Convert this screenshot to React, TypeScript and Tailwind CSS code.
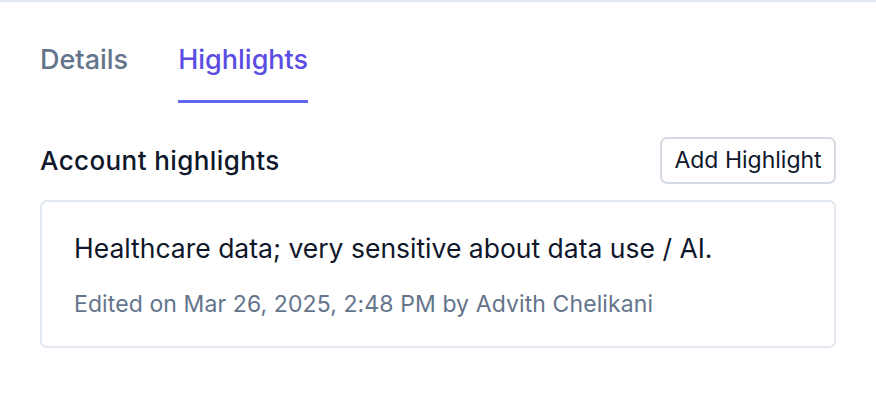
import React from "react";

export default function App() {
  return (
    <div className="w-[876px] h-[420px] bg-white border-t-2 border-[#e2e8f0] overflow-hidden" style={{ fontFamily: "Inter, 'Noto Sans', sans-serif" }}>
      <div className="px-10">
        <div className="flex items-start gap-[50px] pt-[40px]">
          <div className="text-[27px] leading-[36px] text-[#64748b] font-medium">Details</div>
          <div className="pb-[22px] text-[27px] leading-[36px] text-[#5b4de4] font-medium border-b-[3px] border-[#6366f1]">Highlights</div>
        </div>
        <div className="mt-[34px] flex items-center justify-between">
          <div className="text-[26px] leading-[32px] tracking-[0.4px] font-medium text-[#0f172a]">Account highlights</div>
          <button className="h-[47px] w-[176px] rounded-[7px] border-2 border-[#d3dae3] text-[23px] text-[#0f172a] bg-white">Add Highlight</button>
        </div>
        <div className="mt-[16px] h-[148px] rounded-[7px] border-2 border-[#e2e8f0] px-[32px] pt-[30px]">
          <div className="text-[26.5px] leading-[32px] text-[#0f172a]">Healthcare data; very sensitive about data use / AI.</div>
          <div className="mt-[25px] text-[23px] leading-[30px] tracking-[0.1px] text-[#64748b]">Edited on Mar 26, 2025, 2:48 PM by Advith Chelikani</div>
        </div>
      </div>
    </div>
  );
}
